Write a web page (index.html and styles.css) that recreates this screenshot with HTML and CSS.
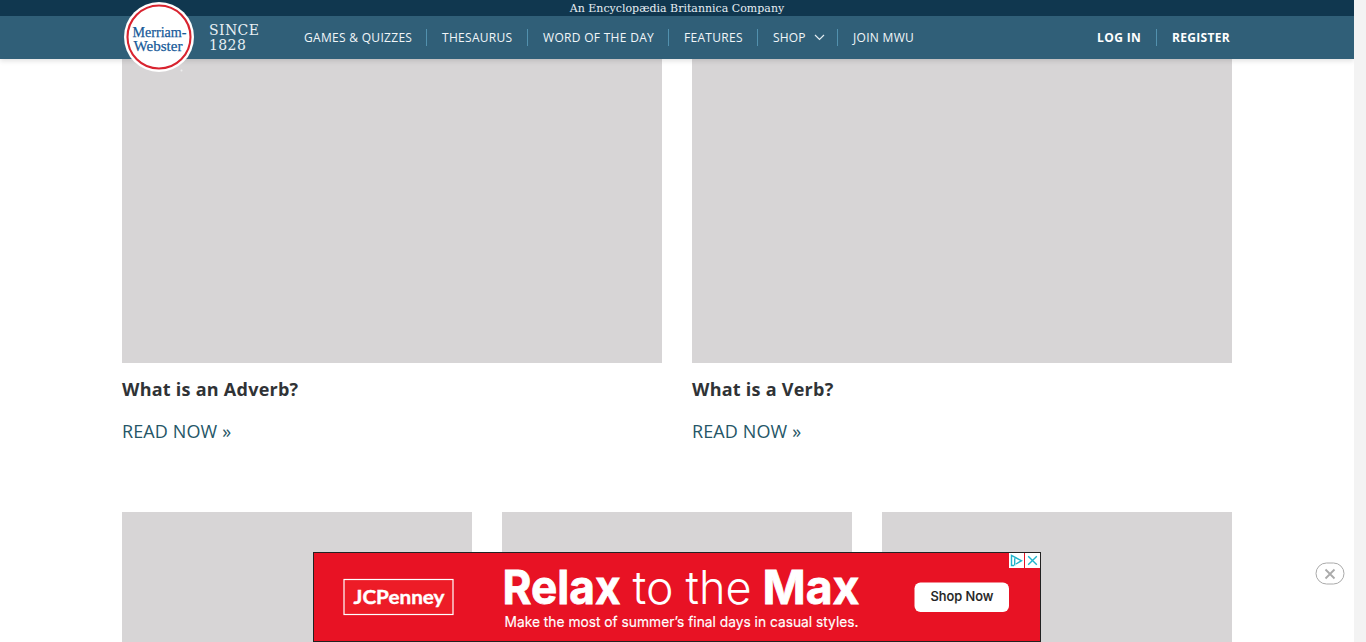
FILE: index.html
```html
<!DOCTYPE html>
<html lang="en">
<head>
<meta charset="utf-8">
<title>Merriam-Webster</title>
<link rel="stylesheet" href="styles.css">
</head>
<body>
<div class="page">
  <header class="header">
    <div class="topbar">An Encyclopædia Britannica Company</div>
    <div class="navbar">
      <a class="since">SINCE<br>1828</a>
      <nav class="nav">
        <a class="item games">GAMES &amp; QUIZZES</a>
        <a class="item thesaurus">THESAURUS</a>
        <a class="item word">WORD OF THE DAY</a>
        <a class="item features">FEATURES</a>
        <a class="item shop">SHOP <svg class="chevron" viewBox="0 0 11 7"><path d="M1 1l4.500 4.500L10 1"/></svg></a>
        <a class="item join">JOIN MWU</a>
      </nav>
      <div class="account"><a class="item login">LOG IN</a><a class="item register">REGISTER</a></div>
    </div>
    <svg class="logo" viewBox="0 0 72 72">
      <circle cx="36" cy="36" r="35" fill="#fff"/>
      <circle cx="36" cy="36" r="31.500" fill="none" stroke="#d8232f" stroke-width="2.1"/>
      <text x="9.500" y="35.500" textLength="54" lengthAdjust="spacingAndGlyphs">Merriam-</text>
      <text x="10.500" y="50" textLength="49" lengthAdjust="spacingAndGlyphs">Webster</text>
      <circle cx="58.500" cy="69.500" r="1" fill="#eee"/>
    </svg>
  </header>
  <main class="content">
    <div class="features-row">
      <article class="card"><div class="picture large"></div><h2>What is an Adverb?</h2><a class="read">READ NOW »</a></article>
      <article class="card"><div class="picture large"></div><h2>What is a Verb?</h2><a class="read">READ NOW »</a></article>
    </div>
    <div class="small-row">
      <div class="picture"></div><div class="picture"></div><div class="picture"></div>
    </div>
  </main>
  <aside class="ad">
    <svg class="creative" viewBox="0 0 726 88">
      <rect x="30" y="26.500" width="109" height="35" fill="#ed1c27" stroke="#fff" stroke-width="1.2"/>
      <text class="brand" x="39.500" y="50.500" textLength="91" lengthAdjust="spacingAndGlyphs">JCPenney</text>
      <text class="bold" x="188.500" y="51" textLength="118" lengthAdjust="spacingAndGlyphs">Relax</text>
      <text class="thin" x="318.500" y="51" textLength="41" lengthAdjust="spacingAndGlyphs">to</text>
      <text class="thin" x="371.500" y="51" textLength="66" lengthAdjust="spacingAndGlyphs">the</text>
      <text class="bold" x="448.500" y="51" textLength="97" lengthAdjust="spacingAndGlyphs">Max</text>
      <text class="sub" x="190.500" y="73.500" textLength="354" lengthAdjust="spacingAndGlyphs">Make the most of summer’s final days in casual styles.</text>
      <rect x="600.500" y="29.500" width="94.500" height="29.500" rx="6" fill="#fff"/>
      <text class="cta" x="616.500" y="47.800" textLength="63" lengthAdjust="spacingAndGlyphs">Shop Now</text>
    </svg>
    <div class="choices">
      <svg viewBox="0 0 15 15"><path d="M5 12.500H2.500V2.500l10 5.200-5.500 3.300M5.700 5.200v7.300"/></svg>
      <svg viewBox="0 0 15 15"><path d="M3.200 3.200l8.600 8.600M11.800 3.200l-8.600 8.600"/></svg>
    </div>
  </aside>
  <svg class="dismiss" viewBox="0 0 30 23"><rect x="1" y="1" width="28" height="21" rx="10.500"/><path d="M10.500 7.500l9 9M19.500 7.500l-9 9"/></svg>
</div>
</body>
</html>
```
FILE: styles.css
```css
* { box-sizing: border-box; }
html { overflow: hidden; }
body { margin: 0; height: 642px; overflow: hidden; background: #f3f3f3; font-family: "Open Sans", sans-serif; }
.page { position: relative; width: 1354px; height: 642px; overflow: hidden; background: #fff; }
.header { position: relative; z-index: 2; height: 59px; box-shadow: 0 2px 5px rgba(0,0,0,.12); }
.topbar { height: 16px; padding-top: 1px; background: #10374f; color: #e7eef3; font: 11px/15px "DejaVu Serif", serif; text-align: center; }
.navbar { display: flex; align-items: center; height: 43px; padding: 0 109px 0 209px; background: #305f78; }
.logo { position: absolute; left: 123px; top: 1px; width: 72px; height: 72px; }
.logo text { font-family: "Liberation Serif", serif; font-size: 15.5px; fill: #175a99; stroke: #175a99; stroke-width: .25px; }
.since { width: 80px; color: #e8f0f4; font: 14px/15px "DejaVu Serif", serif; letter-spacing: .4px; }
.nav, .account { display: flex; }
.account { margin-left: auto; font-weight: 700; }
.item { display: flex; align-items: center; height: 17px; padding-left: 15px; border-right: 1px solid #5291ae; color: #f1f6f8; font-size: 12px; letter-spacing: .3px; white-space: nowrap; }
.games { width: 138px; }
.thesaurus { width: 101px; }
.word { width: 141px; }
.features { width: 89px; }
.shop { width: 80px; letter-spacing: .2px; }
.join, .register { border-right: 0; }
.login { width: 75px; color: #fff; letter-spacing: .4px; }
.register { width: 88px; color: #fff; }
.chevron { width: 11px; height: 7px; margin-left: 8px; fill: none; stroke: #e4edf2; stroke-width: 1.2; }
.content { width: 1110px; margin-left: 122px; }
.features-row { display: flex; gap: 30px; height: 453px; }
.card { width: 540px; }
.picture { flex: 1; background: #d7d5d6; }
.large { height: 304px; }
.card h2 { margin: 11px 0 12px; color: #303336; font-size: 18px; line-height: 30px; letter-spacing: .25px; }
.read { display: block; color: #265667; font-size: 18px; line-height: 30px; letter-spacing: .12px; }
.small-row { display: flex; gap: 30px; height: 130px; }
.ad { position: absolute; z-index: 3; left: 313px; top: 552px; width: 728px; height: 90px; border: 1px solid #222; background: #e81224; }
.creative { display: block; width: 726px; height: 88px; fill: #fff; font-family: Inter, sans-serif; }
.brand { font-family: Lato, sans-serif; font-size: 19px; font-weight: 700; stroke: #fff; stroke-width: .4px; }
.bold { font-size: 47px; font-weight: 700; stroke: #fff; stroke-width: .8px; }
.thin { font-size: 46px; font-weight: 300; }
.sub { font-size: 14.5px; stroke: #fff; stroke-width: .15px; }
.cta { font-size: 13px; font-weight: 500; fill: #222; stroke: #222; stroke-width: .15px; }
.choices { position: absolute; right: 0; top: 0; display: flex; gap: 1px; }
.choices svg { width: 15px; height: 15px; background: #fff; fill: none; stroke: #20b4cc; stroke-width: 1.4; }
.dismiss { position: absolute; left: 1314.500px; top: 561.500px; width: 30px; height: 23px; fill: #fff; stroke: #aaa; }
.dismiss path { stroke-width: 1.8; }
```
